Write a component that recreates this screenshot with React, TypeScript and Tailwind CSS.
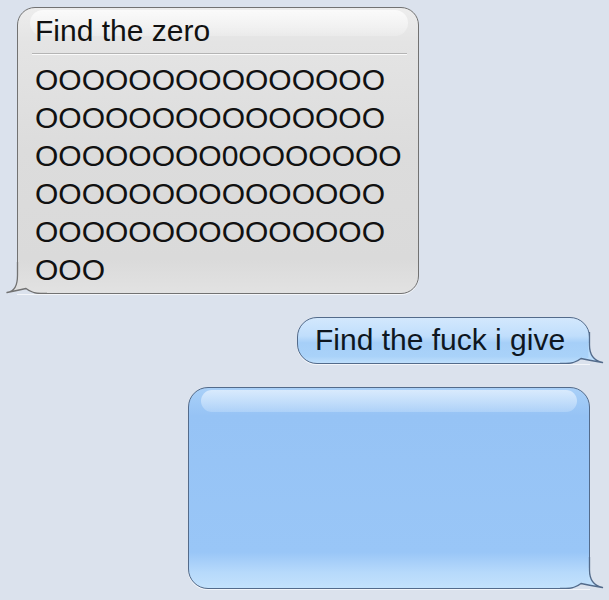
import React from "react";

function Tail({
  fill,
  stroke,
  bg,
  tip,
  left,
}: {
  fill: string;
  stroke: string;
  bg: string;
  tip: number;
  left?: boolean;
}) {
  const outline = `M29.5 0 L29.5 13 C29.5 24 ${tip - 7.5} 29 ${tip} 30.5 Q30 28.5 21 26.5 C17 29.5 13 31.5 6 31.5 L0 31.5`;
  const bubble = `M28.4 11 L29.5 11 L29.5 13 C29.5 24 ${tip - 7.5} 29 ${tip} 30.5 Q30 28.5 21 26.5 L28.4 26.5 Z`;
  const notch = `M5 32.5 L5 31.5 L6 31.5 C13 31.5 17 29.5 21 26.5 Q26 27.6 31 28.6 L31 32.5 Z`;
  return (
    <svg
      width="44"
      height="32"
      viewBox="0 0 44 32"
      className={
        left
          ? "absolute bottom-[-1px] left-[-15px] -scale-x-100 pointer-events-none"
          : "absolute bottom-[-1px] right-[-15px] pointer-events-none"
      }
    >
      <path d={bubble} fill={fill} />
      <path d={notch} fill={bg} />
      <path d={outline} fill="none" stroke={stroke} strokeWidth="1.3" strokeLinejoin="round" />
    </svg>
  );
}

const O15 = "OOOOOOOOOOOOOOO";
const BG = "#dbe2ed";

export default function App() {
  return (
    <div
      className="w-[609px] h-[600px] bg-[#dbe2ed] flex flex-col overflow-hidden"
      style={{ fontFamily: '"Liberation Sans", Arial, sans-serif' }}
    >
      {/* Received grey bubble */}
      <div className="relative ml-[17px] mt-[7px] w-[402px] h-[287px] rounded-[18px] rounded-bl-none border border-[#727272] bg-[linear-gradient(to_bottom,#ededed_0%,#e4e4e4_12%,#dcdcdc_50%,#dadada_88%,#e2e2e2_100%)] shadow-[0_1px_0_rgba(255,255,255,0.7)]">
        <div className="absolute top-[2px] left-[12px] right-[10px] h-[26px] rounded-[13px] bg-[linear-gradient(to_bottom,rgba(255,255,255,0.75),rgba(255,255,255,0.2))]" />
        <div className="relative flex flex-col text-[30px] leading-[38px] text-[#111]">
          <div className="pt-[4px] pl-[17px]">Find the zero</div>
          <div className="mt-[3px] ml-[14px] mr-[11px] h-[1px] bg-[#b4b4b4] shadow-[0_1px_0_rgba(255,255,255,0.8)]" />
          <div className="mt-[7px] pl-[17px] flex flex-col">
            <div>{O15}</div>
            <div>{O15}</div>
            <div>OOOOOOOO0OOOOOOO</div>
            <div>{O15}</div>
            <div>{O15}</div>
            <div>OOO</div>
          </div>
        </div>
        <Tail left tip={40} fill="#e0e0e0" bg={BG} stroke="#727272" />
      </div>

      {/* Sent small bubble */}
      <div className="relative self-end mr-[19px] mt-[23px] w-[293px] h-[47px] rounded-[20px] rounded-br-none border border-[#536b8b] bg-[linear-gradient(to_bottom,#d3e8fd_0%,#c0defc_40%,#a6cff8_55%,#a9d2f9_85%,#bfdffc_100%)] shadow-[0_1px_0_rgba(255,255,255,0.7)]">
        <div className="pt-[3px] pl-[17px] text-[30px] leading-[38px] text-[#0e1620] whitespace-nowrap">
          Find the fuck i give
        </div>
        <Tail tip={42.5} fill="#bcdefc" bg={BG} stroke="#536b8b" />
      </div>

      {/* Sent big empty bubble */}
      <div className="relative self-end mr-[19px] mt-[23px] w-[402px] h-[202px] rounded-[20px] rounded-br-none border border-[#536b8b] bg-[linear-gradient(to_bottom,#a9d0f8_0%,#96c3f5_14%,#99c6f7_82%,#b6d9fb_92%,#c3e2fc_100%)] shadow-[0_1px_0_rgba(255,255,255,0.7)]">
        <div className="absolute top-[2px] left-[12px] right-[12px] h-[22px] rounded-[11px] bg-[linear-gradient(to_bottom,rgba(225,239,254,0.85),rgba(190,219,250,0.55))]" />
        <Tail tip={42.5} fill="#c0e0fc" bg={BG} stroke="#536b8b" />
      </div>
    </div>
  );
}
